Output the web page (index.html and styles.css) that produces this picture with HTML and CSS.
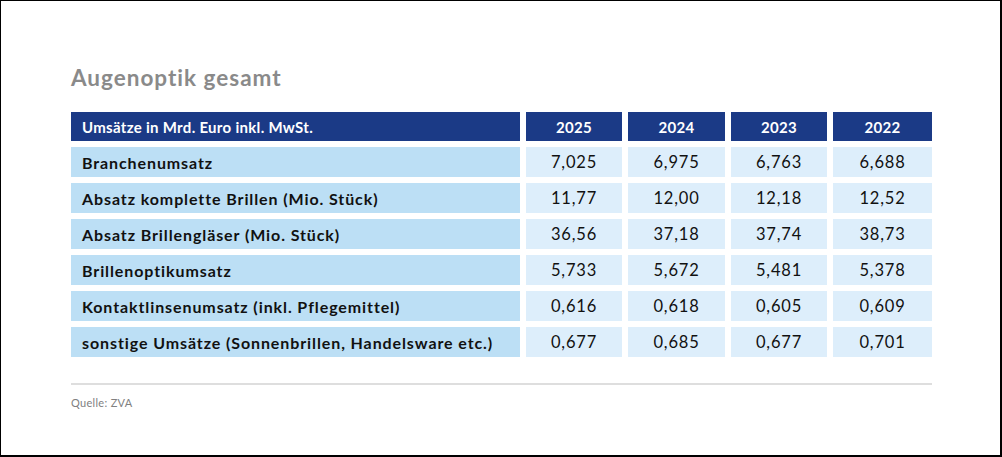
FILE: index.html
```html
<!DOCTYPE html>
<html lang="de">
<head>
<meta charset="utf-8">
<title>Augenoptik gesamt</title>
<link rel="stylesheet" href="styles.css">
</head>
<body>
<div class="frame">
  <h1 class="title">Augenoptik gesamt</h1>
  <div class="table">
    <div class="th label">Umsätze in Mrd. Euro inkl. MwSt.</div>
    <div class="th">2025</div>
    <div class="th">2024</div>
    <div class="th">2023</div>
    <div class="th">2022</div>

    <div class="rl">Branchenumsatz</div>
    <div class="num">7,025</div><div class="num">6,975</div><div class="num">6,763</div><div class="num">6,688</div>

    <div class="rl">Absatz komplette Brillen (Mio. Stück)</div>
    <div class="num">11,77</div><div class="num">12,00</div><div class="num">12,18</div><div class="num">12,52</div>

    <div class="rl">Absatz Brillengläser (Mio. Stück)</div>
    <div class="num">36,56</div><div class="num">37,18</div><div class="num">37,74</div><div class="num">38,73</div>

    <div class="rl">Brillenoptikumsatz</div>
    <div class="num">5,733</div><div class="num">5,672</div><div class="num">5,481</div><div class="num">5,378</div>

    <div class="rl">Kontaktlinsenumsatz (inkl. Pflegemittel)</div>
    <div class="num">0,616</div><div class="num">0,618</div><div class="num">0,605</div><div class="num">0,609</div>

    <div class="rl">sonstige Umsätze (Sonnenbrillen, Handelsware etc.)</div>
    <div class="num">0,677</div><div class="num">0,685</div><div class="num">0,677</div><div class="num">0,701</div>
  </div>
  <div class="rule"></div>
  <p class="source">Quelle: ZVA</p>
</div>
</body>
</html>
```

FILE: styles.css
```css
* { box-sizing: border-box; }
html, body { margin: 0; padding: 0; background: #fff; }
body { font-family: Lato, "Open Sans", sans-serif; }

.frame {
  width: 1002px;
  height: 457px;
  border-style: solid;
  border-color: #000;
  border-width: 1px 2px 2px 1px;
  padding: 0 0 0 70px;
}

.title {
  margin: 62px 0 0 0;
  font-size: 22.5px;
  line-height: 30px;
  font-weight: 700;
  color: #8a8a8a;
  letter-spacing: 1px;
}

.table {
  margin-top: 19px;
  display: grid;
  grid-template-columns: 449px 96px 97px 96px 99px;
  grid-template-rows: 29px repeat(6, 30px);
  column-gap: 6px;
  row-gap: 6px;
}

.th {
  background: #1b3a86;
  color: #fff;
  font-weight: 700;
  font-size: 15px;
  letter-spacing: 0.3px;
  display: flex;
  align-items: center;
  justify-content: center;
}
.th.label { justify-content: flex-start; padding-left: 11px; }

.rl {
  background: #bcdff5;
  color: #111;
  font-weight: 700;
  font-size: 16px;
  letter-spacing: 0.9px;
  display: flex;
  align-items: center;
  padding-left: 11px;
}

.num {
  background: #ddeefb;
  color: #111;
  font-size: 16.5px;
  letter-spacing: 0.8px;
  display: flex;
  align-items: center;
  justify-content: center;
}

.rule {
  margin-top: 26px;
  width: 861px;
  height: 2px;
  background: #dedede;
}

.source {
  margin: 11px 0 0 0;
  font-size: 11px;
  letter-spacing: 0.3px;
  color: #808080;
}
```
